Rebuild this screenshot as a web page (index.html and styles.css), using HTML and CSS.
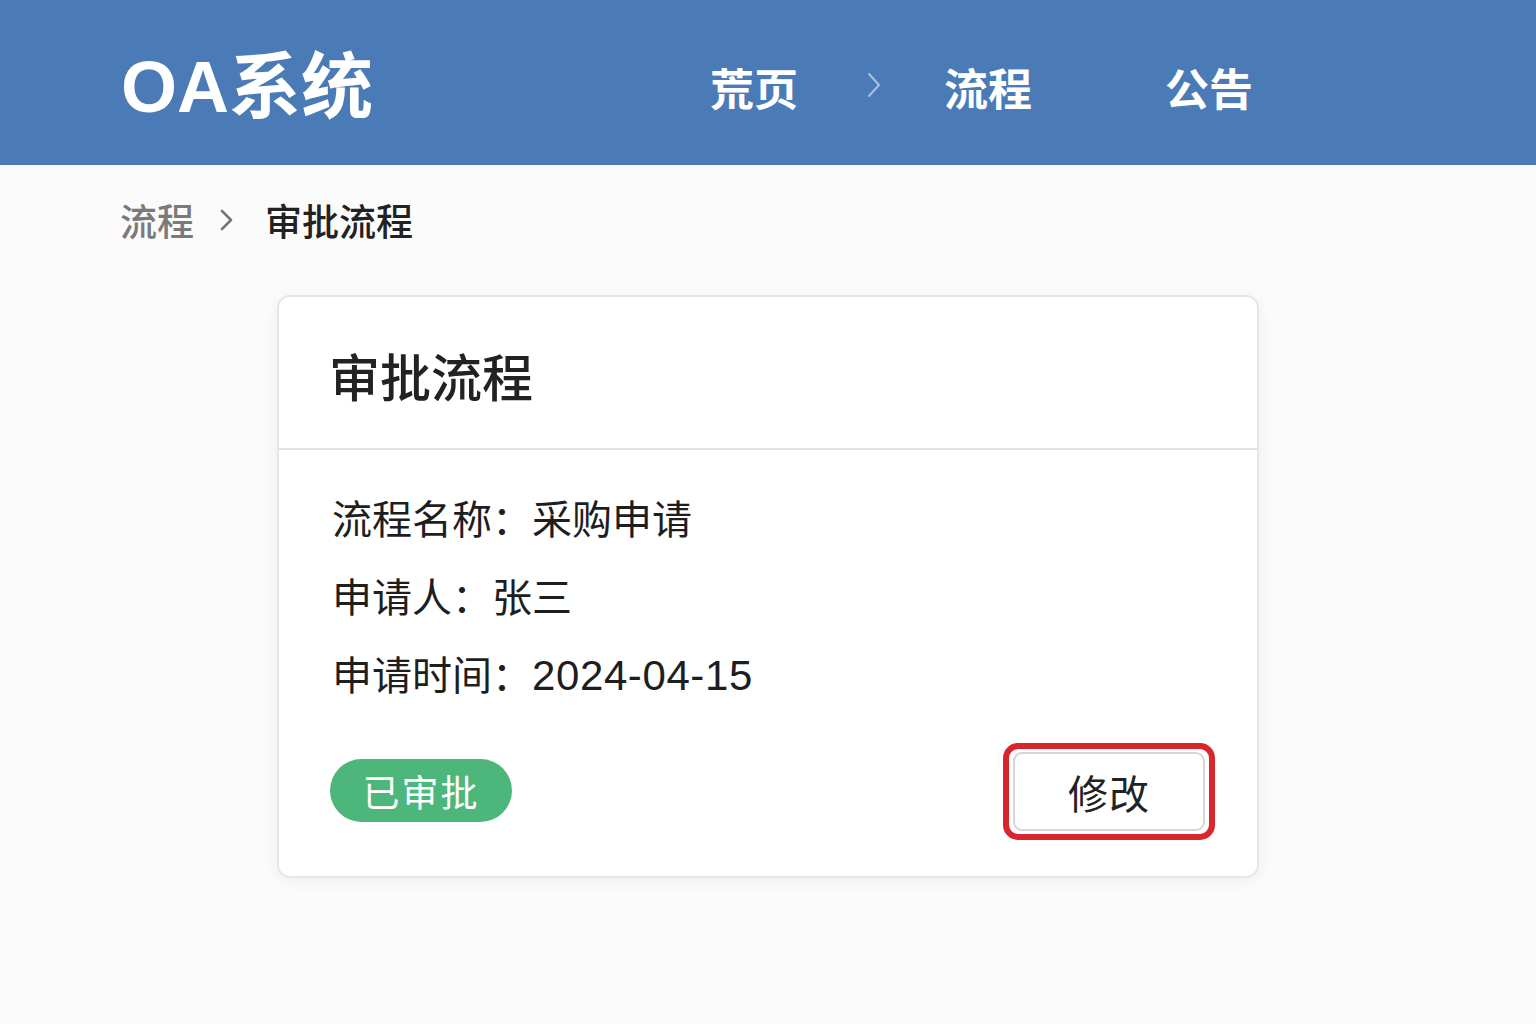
FILE: index.html
```html
<!DOCTYPE html>
<html lang="zh-CN">
<head>
<meta charset="utf-8">
<title>OA系统</title>
<link rel="stylesheet" href="styles.css">
</head>
<body>
<header class="topbar">
  <div class="logo">OA系统</div>
  <nav class="nav">
    <a class="nav-item nav-home">荒页</a>
    <span class="nav-sep">
      <svg width="16" height="26" viewBox="0 0 16 26"><path d="M3 2 L13 13 L3 24" fill="none" stroke="#a9c0e0" stroke-width="2" stroke-linecap="round" stroke-linejoin="round"/></svg>
    </span>
    <a class="nav-item nav-flow">流程</a>
    <a class="nav-item nav-notice">公告</a>
  </nav>
</header>

<div class="crumbs">
  <span class="crumb-link">流程</span>
  <span class="crumb-sep">
    <svg width="16" height="24" viewBox="0 0 16 24"><path d="M3 3 L12 12 L3 21" fill="none" stroke="#777" stroke-width="2.6" stroke-linecap="round" stroke-linejoin="round"/></svg>
  </span>
  <span class="crumb-current">审批流程</span>
</div>

<main class="card">
  <div class="card-head">
    <h1 class="card-title">审批流程</h1>
  </div>
  <div class="card-body">
    <div class="row">流程名称：采购申请</div>
    <div class="row">申请人：张三</div>
    <div class="row">申请时间：<span class="num">2024-04-15</span></div>
    <div class="card-foot">
      <span class="badge">已审批</span>
      <div class="highlight">
        <button class="btn">修改</button>
      </div>
    </div>
  </div>
</main>
</body>
</html>
```
FILE: styles.css
```css
* { box-sizing: border-box; }
html, body { margin: 0; padding: 0; }
body {
  background: #fbfbfb;
  font-family: "Noto Sans CJK SC", "Noto Sans", sans-serif;
  color: #222;
  width: 1536px;
  height: 1024px;
  overflow: hidden;
}
.topbar {
  height: 165px;
  background: #4b7bb7;
  display: flex;
  align-items: center;
  padding-left: 121px;
}
.logo {
  width: 589px;
  color: #fff;
  font-family: "Liberation Sans", "Noto Sans CJK SC", sans-serif;
  font-size: 72px;
  font-weight: 700;
  line-height: 1;
  margin-top: 8px;
}
.nav {
  display: flex;
  align-items: center;
  margin-top: 8px;
}
.nav-item {
  color: #fff;
  font-size: 44px;
  font-weight: 700;
  line-height: 1;
}
.nav-sep {
  display: flex;
  margin-left: 68px;
  margin-right: 62px;
  margin-top: -4px;
}
.nav-notice { margin-left: 133px; }

.crumbs {
  display: flex;
  align-items: center;
  padding-left: 120px;
  height: 112px;
  padding-bottom: 2px;
}
.crumb-link { color: #7a7a7a; font-size: 37px; font-weight: 500; line-height: 1; }
.crumb-sep { display: flex; margin-left: 25px; margin-right: 30px; }
.crumb-current { color: #222; font-size: 37px; font-weight: 500; line-height: 1; }

.card {
  margin-left: 277px;
  margin-top: 18px;
  width: 982px;
  height: 583px;
  background: #fff;
  border: 2px solid #e6e6e6;
  border-radius: 13px;
  box-shadow: 0 4px 18px rgba(0,0,0,0.05);
}
.card-head {
  height: 153px;
  border-bottom: 2px solid #e2e2e2;
  display: flex;
  align-items: center;
  padding-left: 50px;
}
.card-title {
  margin: 0;
  font-size: 51px;
  font-weight: 500;
  color: #222;
  line-height: 1;
  margin-top: 6px;
}
.card-body {
  padding: 28px 42px 0 53px;
}
.row {
  font-size: 40px;
  font-weight: 400;
  line-height: 78px;
  color: #1e1e1e;
}
.num {
  font-family: "Liberation Sans", sans-serif;
  font-size: 42px;
  letter-spacing: 0.6px;
  font-weight: 400;
}
.card-foot {
  display: flex;
  align-items: center;
  justify-content: space-between;
  margin-top: 28px;
}
.badge {
  display: flex;
  align-items: center;
  justify-content: center;
  width: 182px;
  height: 63px;
  margin-left: -2px;
  border-radius: 32px;
  background: #4db67b;
  color: #fff;
  font-size: 37px;
  letter-spacing: 2px;
  margin-top: -2px;
}
.highlight {
  border: 6px solid #d8262c;
  border-radius: 15px;
  padding: 3px 4px;
  width: 212px;
  height: 97px;
}
.btn {
  width: 100%;
  height: 100%;
  background: #fff;
  border: 2px solid #d6d6d6;
  border-radius: 9px;
  font-family: "Noto Sans CJK SC", "Noto Sans", sans-serif;
  font-size: 40px;
  color: #222;
  letter-spacing: 1px;
  padding: 0;
  line-height: 1;
}
```
